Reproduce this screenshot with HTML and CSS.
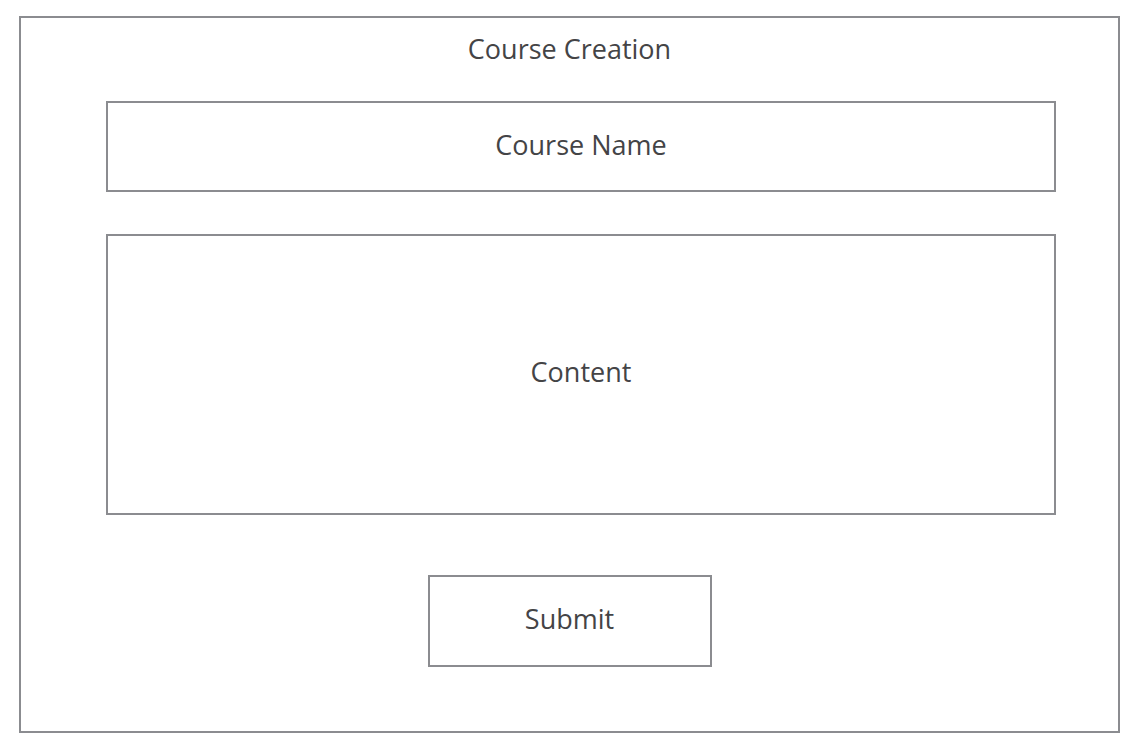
FILE: index.html
```html
<!DOCTYPE html>
<html>
<head>
<meta charset="utf-8">
<link rel="stylesheet" href="styles.css">
</head>
<body>
<div class="frame">
  <div class="title">Course Creation</div>
  <div class="field name">Course Name</div>
  <div class="field content">Content</div>
  <div class="submit">Submit</div>
</div>
</body>
</html>
```
FILE: styles.css
```css
html, body {
  margin: 0;
  padding: 0;
  background: #ffffff;
}
body {
  font-family: "Open Sans", "Noto Sans", sans-serif;
  color: #444446;
}
.frame {
  box-sizing: border-box;
  margin: 16px 0 0 19px;
  width: 1101px;
  height: 717px;
  border: 2px solid #8b8c90;
  display: flex;
  flex-direction: column;
}
.title {
  height: 70px;
  margin-top: 13px;
  font-size: 27px;
  line-height: 36px;
  text-align: center;
}
.field {
  box-sizing: border-box;
  margin-left: 85px;
  width: 950px;
  border: 2px solid #8b8c90;
  padding-bottom: 4px;
  display: flex;
  align-items: center;
  justify-content: center;
  font-size: 27px;
}
.name {
  height: 91px;
}
.content {
  height: 281px;
  margin-top: 42px;
  padding-bottom: 6px;
}
.submit {
  box-sizing: border-box;
  align-self: center;
  width: 284px;
  height: 92px;
  margin-top: 60px;
  border: 2px solid #8b8c90;
  padding-bottom: 5px;
  display: flex;
  align-items: center;
  justify-content: center;
  font-size: 27px;
}
```
